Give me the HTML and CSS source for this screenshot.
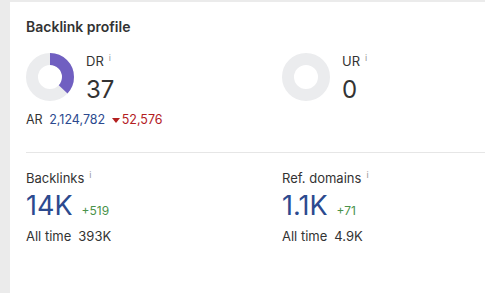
FILE: index.html
```html
<!DOCTYPE html>
<html>
<head>
<meta charset="utf-8">
<link rel="stylesheet" href="styles.css">
</head>
<body>
<div class="card">
  <h2 class="title">Backlink profile</h2>
  <div class="grid top">
    <div class="col">
      <div class="metric">
        <svg class="donut" viewBox="0 0 48 48" width="48" height="48">
          <circle cx="24" cy="24" r="18" fill="none" stroke="#ebecee" stroke-width="12"/>
          <circle cx="24" cy="24" r="18" fill="none" stroke="#705fc1" stroke-width="12" pathLength="100" stroke-dasharray="37 63" transform="rotate(-90 24 24)"/>
        </svg>
        <div class="mtext">
          <div class="label">DR<sup class="info">i</sup></div>
          <div class="big">37</div>
        </div>
      </div>
      <div class="ar">AR <span class="blue">2,124,782</span> <span class="red"><span class="tri"></span>52,576</span></div>
    </div>
    <div class="col">
      <div class="metric">
        <svg class="donut" viewBox="0 0 48 48" width="48" height="48">
          <circle cx="24" cy="24" r="18" fill="none" stroke="#ebecee" stroke-width="12"/>
        </svg>
        <div class="mtext">
          <div class="label">UR<sup class="info">i</sup></div>
          <div class="big">0</div>
        </div>
      </div>
    </div>
  </div>
  <div class="divider"></div>
  <div class="grid bottom">
    <div class="col">
      <div class="label">Backlinks<sup class="info">i</sup></div>
      <div class="stat"><span class="num">14K</span><span class="delta">+519</span></div>
      <div class="alltime">All time<span class="atv">393K</span></div>
    </div>
    <div class="col">
      <div class="label">Ref. domains<sup class="info">i</sup></div>
      <div class="stat"><span class="num">1.1K</span><span class="delta">+71</span></div>
      <div class="alltime">All time<span class="atv">4.9K</span></div>
    </div>
  </div>
</div>
</body>
</html>
```
FILE: styles.css
```css
html, body {
  margin: 0;
  padding: 0;
}
body {
  background: #ebebeb;
  font-family: Inter, "Noto Sans", sans-serif;
  color: #333;
  overflow: hidden;
  height: 293px;
}
.card {
  background: #fff;
  margin: 2px 0 0 10px;
  padding: 15px 0 0 16px;
  height: 276px;
}
.title {
  margin: 0;
  font-size: 14px;
  line-height: 20px;
  font-weight: 600;
  color: #333;
}
.grid {
  display: grid;
  grid-template-columns: 256px 1fr;
}
.top {
  margin-top: 16px;
}
.metric {
  display: flex;
  align-items: flex-start;
  gap: 12px;
}
.donut {
  display: block;
  flex: none;
}
.label {
  font-size: 13px;
  line-height: 16px;
  color: #333;
}
.info {
  font-size: 9px;
  line-height: 0;
  color: #999;
  margin-left: 5px;
  vertical-align: 5px;
}
.big {
  font-size: 24px;
  line-height: 28px;
  margin-top: 7px;
  color: #333;
}
.ar {
  margin-top: 8px;
  font-size: 12.5px;
  line-height: 16px;
  color: #333;
}
.blue {
  color: #2c4a8f;
  margin-left: 3px;
}
.red {
  color: #b3201f;
  margin-left: 3px;
}
.tri {
  display: inline-block;
  width: 0;
  height: 0;
  border-left: 4px solid transparent;
  border-right: 4px solid transparent;
  border-top: 5px solid #b3201f;
  vertical-align: 1px;
  margin-right: 2px;
}
.divider {
  height: 1px;
  background: #e6e6e6;
  margin-top: 24px;
}
.bottom {
  margin-top: 17px;
}
.stat {
  display: flex;
  align-items: baseline;
  gap: 9px;
  margin-top: 4px;
}
.num {
  font-size: 27px;
  line-height: 32px;
  color: #2c4a8f;
}
.delta {
  font-size: 12px;
  color: #4a924a;
}
.alltime {
  margin-top: 6px;
  font-size: 13px;
  line-height: 16px;
  color: #333;
}
.atv {
  margin-left: 7px;
}
```
